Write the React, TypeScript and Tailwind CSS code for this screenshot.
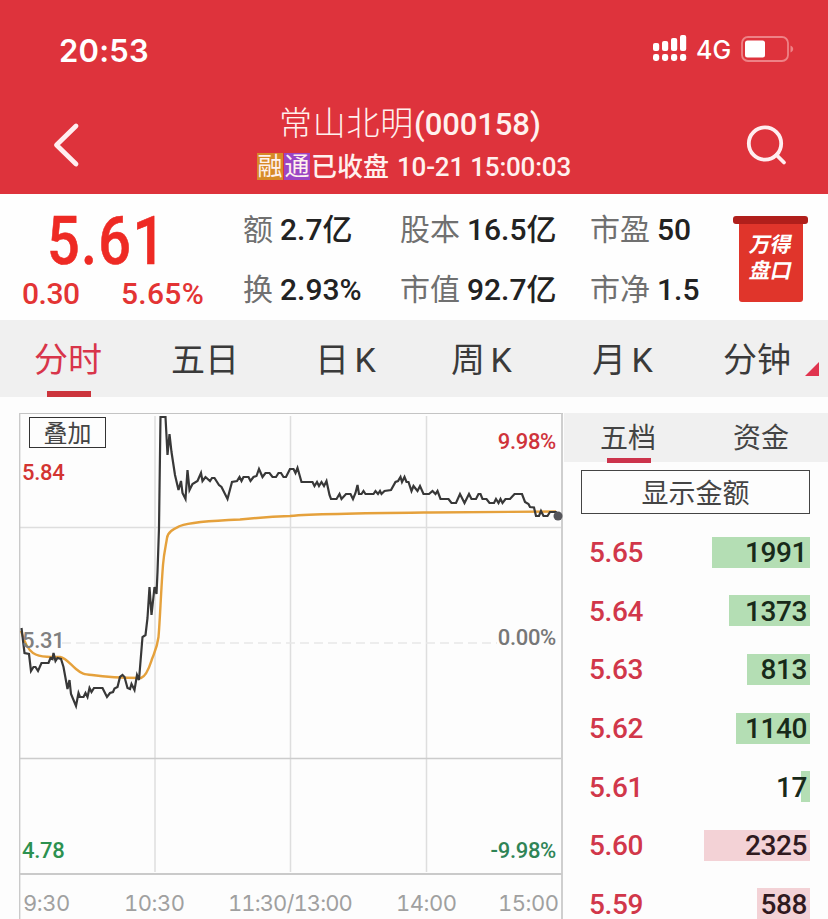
import React from 'react';

const stats = [
  { label: '额', value: '2.7亿' },
  { label: '股本', value: '16.5亿' },
  { label: '市盈', value: '50' },
  { label: '换', value: '2.93%' },
  { label: '市值', value: '92.7亿' },
  { label: '市净', value: '1.5' },
];

const periods = [
  { name: '分时', className: 'w-[137px] pl-[34px] text-[#d8354a]' },
  { name: '五日', className: 'w-[144px] pl-[34px]' },
  { name: '日 K', className: 'w-[136px] pl-[34px]' },
  { name: '周 K', className: 'w-[141px] pl-[34px]' },
  { name: '月 K', className: 'w-[132px] pl-[34px]' },
  { name: '分钟', className: 'w-[138px] pl-[33px]' },
];

const orders = [
  { price: '5.65', volume: '1991', width: 98, side: 'sell' },
  { price: '5.64', volume: '1373', width: 81, side: 'sell' },
  { price: '5.63', volume: '813', width: 63, side: 'sell' },
  { price: '5.62', volume: '1140', width: 74, side: 'sell' },
  { price: '5.61', volume: '17', width: 9, side: 'sell' },
  { price: '5.60', volume: '2325', width: 106, side: 'buy' },
  { price: '5.59', volume: '588', width: 53, side: 'buy' },
];

const pricePoints =
  '21.5,628 24.5,653 29,654 31,671 33.5,667 35.5,667 38,671 41.5,663 48.5,663 50.5,658 52.5,659 53.5,653 55.5,661 57.5,658 61,659 63.5,667 67.5,689 69.5,680 71,694 76,706 78.5,693 80,697 83.5,697 85.5,693 87.5,697 89.5,688 91.5,692 94,688 102.5,688 104.5,692 107,697 110,693 113,692 114.5,688.5 117.5,687 120,677 122.5,675 124.5,677 127.5,688 130,689 131.5,684 134.5,690 137,675 139,680 142.5,637 145.5,635 147.5,618 149.5,587 151.5,615 154.5,587 156.5,594 157.5,572 159,528 160.5,417 165.5,417 167.5,455 169.5,434 171.5,452 175,475 178.5,490 181,481 182.5,493 185.5,499 187.5,470 189.5,490 192.5,484 197.5,481 201,473 202.5,481 205.5,477 210,481 212,478 214.5,478 219,485 221.5,487 227.5,499 232,482 237,481 239.5,477 241.5,481 243.5,477 248.5,477 250.5,481 253.5,477 256.5,476 259,469 262.5,477 265.5,473 269.5,473 272.5,477 276,477 278.5,473 281,473 283.5,477 286,477 290,469 293.5,469 295.5,473 297.5,468 301.5,482 312.5,482 314.5,486 317,482 319,486 321.5,482 324,486 326.5,481 329.5,495 331,499 336.5,499 339.5,494 341.5,499 346,494 350.5,494 353,499 355.5,493 357.5,485 359,494 361.5,494 363.5,491 365.5,494 373.5,494 375.5,491 378,494 380,491 381.5,494 384.5,491 391,490 395.5,482 398,481 400.5,477 402,482 404.5,477 406.5,482 408.5,482 411.5,491 413.5,486 417.5,491 420,486 423.5,494 429,494 432.5,491 435.5,494 437.5,491 440.5,499 448.5,499 451.5,503 456,503 460,494 464.5,503 469,494 471.5,499 476,499 478.5,494 480.5,494 482.5,499 486.5,499 489.5,503 494,503 496,499 498.5,503 500.5,499 502.5,503 505.5,499 510,499 514.5,494 522,494 525,502 528.5,504 530,507 534,507.5 536,516 539,516 541,511 543.5,516 547.5,516 550,512 556,512 558.5,516';

const averagePath =
  'M21 631C24 641 27 649 33 653S44 656.500 50 657H60C66 658 70 664 76 669S84 674.500 92 675C102 676.500 115 678 141 678C147 676 150 665 152 659C155 651 157 648 158.500 637C160 620 161 590 163 565C164 552 166 545 167 538C168 531 175 528.500 180 526C190 522 215 520.500 240 519.500C265 517 275 516.500 290 516C320 513.500 380 513 430 512.500L556 511.500';

const timeLabels = [
  { text: '9:30', className: 'w-[101px]' },
  { text: '10:30', className: 'w-[104px]' },
  { text: '11:30/13:00', className: 'w-[168px] tracking-[-0.9px]' },
  { text: '14:00', className: 'w-[102px]' },
  { text: '15:00', className: '' },
];

const StatusBar = () => (
  <div className="flex h-[98px] items-center justify-between pl-[59px] pr-[34px] font-[Inter,sans-serif] leading-none">
    <span className="pt-[2px] text-[31px] font-semibold tracking-[0.2px]">20:53</span>
    <div className="flex items-center">
      <svg className="h-[28px] w-[34px]" viewBox="0 0 34 28" fill="white">
        {[8, 6, 3, 0].map((y, i) => (
          <g key={i}>
            <rect x={i * 9} y={y} width="6.2" height={16 - y} rx="2" />
            <rect x={i * 9} y="19" width="6.2" height="7" rx="2.4" />
          </g>
        ))}
      </svg>
      <span className="ml-[9px] w-[45px] pt-[3px] text-[25px] font-medium">4G</span>
      <svg className="h-[26px] w-[53px]" viewBox="0 0 53 26">
        <rect x="1" y="1" width="46" height="24" rx="6" fill="none" stroke="#ee8286" strokeWidth="1.8" />
        <rect x="4" y="4.5" width="20" height="17" rx="2.5" fill="white" />
        <path d="M49.5 9.5v7c3.6-1.5 3.6-5.5 0-7z" fill="#ee8286" />
      </svg>
    </div>
  </div>
);

const Header = () => (
  <header className="h-[194px] shrink-0 bg-[#de333c] text-white">
    <StatusBar />
    <div className="flex justify-between pl-[52px] pr-[40px]">
      <svg className="mt-[24px] h-[46px] w-[30px]" viewBox="0 0 30 46" fill="none" stroke="#ffeef0" strokeWidth="4.8" strokeLinecap="round" strokeLinejoin="round">
        <path d="M24 4 4.500 23 24 42" />
      </svg>
      <div className="flex w-[320px] flex-col items-center leading-none text-[#fff1ee]">
        <div className="flex h-[50px] items-center whitespace-nowrap pr-[9px]">
          <span className="text-[33px] font-light tracking-[0.7px]">常山北明</span>
          <span className="pt-px text-[32px] font-medium">
            <span className="inline-block w-[126px] origin-left scale-x-[0.97] tracking-[-0.1px]">(000158)</span>
          </span>
        </div>
        <div className="flex h-[37px] items-center whitespace-nowrap text-[26px]">
          <span className="h-[27px] w-[26px] bg-[#d78a28] text-center text-[25px] leading-[27px]">融</span>
          <span className="ml-px h-[27px] w-[26px] bg-[#9b45c4] text-center text-[25px] leading-[27px]">通</span>
          <span className="ml-px font-medium">已收盘</span>
          <span className="ml-[8px] font-medium tracking-[-0.2px]">10-21 15:00:03</span>
        </div>
      </div>
      <svg className="mt-[26px] h-[44px] w-[42px]" viewBox="0 0 42 44" fill="none" stroke="#ffeef0" strokeWidth="3.800" strokeLinecap="round">
        <circle cx="19" cy="19.500" r="16.200" />
        <path d="M30.500 31l7.500 7.500" />
      </svg>
    </div>
  </header>
);

const Quote = () => (
  <section className="flex h-[126px] shrink-0 bg-[#fefefe] leading-none">
    <div className="flex w-[243px] flex-col text-[#ee2a24]">
      <div className="flex h-[83px] items-center pl-[47px] pt-[11px] text-[67px] font-medium">
        <span className="origin-left scale-x-[0.86] tracking-[1.500px] [-webkit-text-stroke:0.6px_#ee2a24]">5.61</span>
      </div>
      <div className="flex items-center pl-[22px] pt-[2px] text-[30px] font-medium text-[#e33434]">
        <span className="w-[99px] tracking-[-0.5px]">0.30</span>
        <span className="tracking-[0.3px]">5.65%</span>
      </div>
    </div>
    <div className="grid w-[482px] grid-cols-[157px_190px_135px] grid-rows-[60px_60px] pt-[6px]">
      {stats.map((stat) => (
        <div key={stat.label} className="flex items-center whitespace-nowrap text-[30px]">
          <span className="text-[#707070]">{stat.label}</span>
          <span className="ml-[7px] font-medium text-[#222]">{stat.value}</span>
        </div>
      ))}
    </div>
    <div className="ml-[8px] flex w-[75px] flex-col items-center pt-[22px]">
      <div className="h-[8px] w-[75px] rounded-[3px] bg-[#b01f1b]" />
      <div className="flex h-[78px] w-[64px] flex-col items-center rounded-b-[3px] bg-[#e0352b] pt-[8px] text-[21px] font-bold leading-[26px] text-white">
        <span className="-skew-x-12">万得</span>
        <span className="-skew-x-12">盘口</span>
      </div>
    </div>
  </section>
);

const PeriodTabs = () => (
  <nav className="flex h-[77px] shrink-0 bg-[#f0f0f0] text-[34px] leading-[80px] text-[#3a3a3a]">
    {periods.map((period, index) => (
      <div key={period.name} className={`relative whitespace-nowrap [word-spacing:-3px] ${period.className}`}>
        {period.name}
        {index === 0 && <div className="absolute bottom-0 left-[47px] h-[6px] w-[44px] bg-[#cc343c]" />}
        {index === 5 && (
          <svg className="absolute bottom-[21px] right-[9px] h-[14px] w-[14px]" viewBox="0 0 14 14">
            <path d="M14 0v14H0z" fill="#e0344f" />
          </svg>
        )}
      </div>
    ))}
  </nav>
);

const Chart = () => (
  <div className="relative ml-[19px] h-[506px] w-[545px] shrink-0 text-[22px] font-medium leading-none tracking-[-0.3px]">
    <svg className="block h-[506px] w-[545px]" viewBox="19 413 545 506" fill="none">
      <g stroke="#dedede" strokeWidth="1.5">
        <path d="M20 527.500H561M155 416V872M290.500 416V872M426.500 416V872" />
        <path d="M62 643H497" strokeDasharray="9 5" stroke="#e8e8e8" />
        <path d="M20 758.500H561" stroke="#cccccc" />
      </g>
      <path d="M19 413.500H563" stroke="#c4c4c4" />
      <path d="M19.500 413V919M562 413V919M20 874H562" stroke="#cacaca" strokeWidth="1.800" />
      <path d={averagePath} stroke="#e5a13c" strokeWidth="2.400" strokeLinejoin="round" />
      <polyline points={pricePoints} stroke="#383838" strokeWidth="2.200" strokeLinejoin="miter" />
      <circle cx="558" cy="516" r="4.500" fill="#55555a" />
    </svg>
    <div className="absolute left-[10px] top-[4px] h-[31px] w-[77px] border border-[#333] text-center text-[24px] font-normal leading-[32px] tracking-normal text-[#444]">
      叠加
    </div>
    <span className="absolute left-[3px] top-[49px] text-[#d33431]">5.84</span>
    <span className="absolute left-[3px] top-[217px] text-[#808080]">5.31</span>
    <span className="absolute left-[3px] top-[427px] text-[#2c9150]">4.78</span>
    <span className="absolute right-[8px] top-[18px] text-[#cf333b]">9.98%</span>
    <span className="absolute right-[8px] top-[214px] text-[#777]">0.00%</span>
    <span className="absolute right-[8px] top-[427px] text-[#2f8456]">-9.98%</span>
    <div className="absolute inset-x-0 top-[479px] flex pl-[4px] font-[Inter,sans-serif] text-[22px] font-normal tabular-nums tracking-[-0.5px] text-[#a0a0a0]">
      {timeLabels.map((label) => (
        <span key={label.text} className={label.className}>{label.text}</span>
      ))}
    </div>
  </div>
);

const OrderBook = () => (
  <div className="flex-1">
    <div className="flex h-[49px] bg-[#f0f0f0] text-[28px] leading-[52px] text-[#444]">
      <div className="relative w-[132px] pl-[36px]">
        五档
        <div className="absolute bottom-[-1px] left-[43px] h-[5px] w-[44px] bg-[#cc344c]" />
      </div>
      <div className="pl-[37px]">资金</div>
    </div>
    <div className="ml-[17px] mt-[8px] h-[44px] w-[229px] border border-[#444] text-center text-[27px] leading-[46px] text-[#444]">
      显示金额
    </div>
    <div className="ml-[17px] mt-[9px] w-[229px]">
      {orders.map((order) => (
        <div key={order.price} className="flex h-[58.600px] items-center justify-between text-[28px] font-medium leading-none tracking-[-0.4px]">
          <span className="pl-[8px] pt-[2px] text-[#d1374a]">{order.price}</span>
          <div className="relative flex h-[31px] items-center pr-[3px]">
            <div
              className={`absolute right-0 top-0 h-full ${order.side === 'sell' ? 'bg-[#b4deb4]' : 'bg-[#f3d2d6]'}`}
              style={{ width: order.width }}
            />
            <span className={`relative pt-[2px] ${order.side === 'sell' ? 'text-[#182a1a]' : 'text-[#301a1f]'}`}>{order.volume}</span>
          </div>
        </div>
      ))}
    </div>
  </div>
);

export default function App() {
  return (
    <div className="flex h-[919px] w-[828px] flex-col overflow-hidden bg-[#fdfdfd] font-[Roboto,'Noto_Sans_CJK_SC',sans-serif]">
      <Header />
      <Quote />
      <PeriodTabs />
      <div className="flex pt-[16px]">
        <Chart />
        <OrderBook />
      </div>
    </div>
  );
}
